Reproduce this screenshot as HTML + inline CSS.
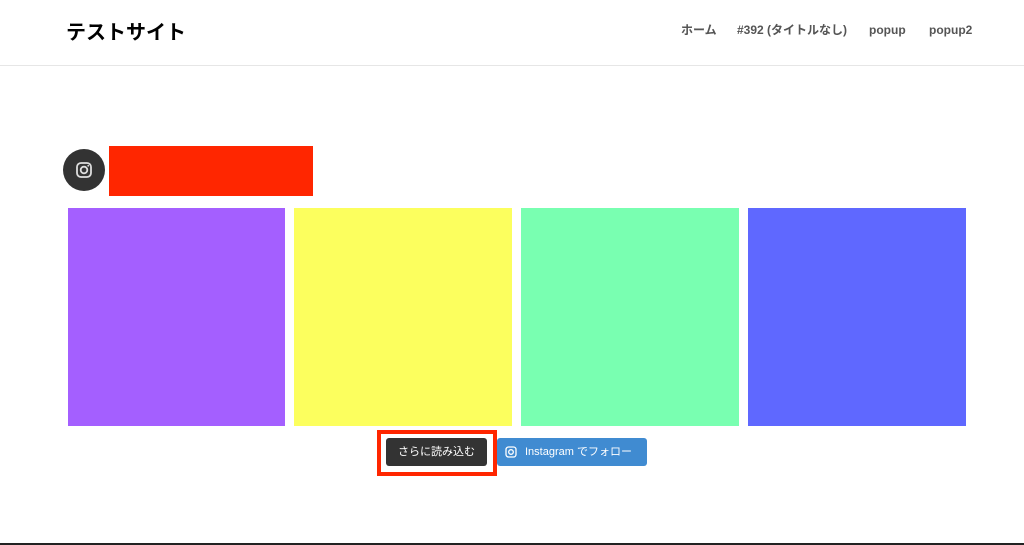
<!DOCTYPE html>
<html><head><meta charset="utf-8"><style>
body{margin:0;width:1024px;height:545px;background:#fff;position:relative;overflow:hidden;font-family:"Liberation Sans","Noto Sans CJK JP",sans-serif}
.a{position:absolute}
.nav{top:22px;height:16px;line-height:16px;font-size:12px;font-weight:bold;color:#555;white-space:nowrap}
</style></head><body>
<div class="a" style="left:66px;top:16px;font-size:20px;font-weight:bold;color:#000">テストサイト</div>
<div class="a nav" style="left:681px">ホーム</div>
<div class="a nav" style="left:737px">#392 (タイトルなし)</div>
<div class="a nav" style="left:869px">popup</div>
<div class="a nav" style="left:929px">popup2</div>
<div class="a" style="left:0;top:65px;width:1024px;height:1px;background:#e6e6e6"></div>
<div class="a" style="left:63px;top:149px;width:42px;height:42px;border-radius:50%;background:#333"></div>
<svg class="a" style="left:74px;top:160px" width="20" height="20" viewBox="0 0 20 20"><rect x="3" y="3" width="14" height="14" rx="4" fill="none" stroke="#ddd" stroke-width="1.8"/><circle cx="10" cy="10" r="3.3" fill="none" stroke="#ddd" stroke-width="1.8"/><circle cx="14.2" cy="5.8" r="0.9" fill="#ddd"/></svg>
<div class="a" style="left:109px;top:146px;width:204px;height:50px;background:#ff2600"></div>
<div class="a" style="left:68px;top:208px;width:217px;height:218px;background:#a45fff"></div>
<div class="a" style="left:294px;top:208px;width:218px;height:218px;background:#fcff5e"></div>
<div class="a" style="left:521px;top:208px;width:218px;height:218px;background:#79ffb1"></div>
<div class="a" style="left:748px;top:208px;width:218px;height:218px;background:#5f68ff"></div>
<div class="a" style="left:377px;top:430px;width:112px;height:38px;border:4px solid #ff2600"></div>
<div class="a" style="left:386px;top:438px;width:101px;height:28px;background:#333;border-radius:3px;color:#fff;font-size:11px;line-height:28px;text-align:center">さらに読み込む</div>
<div class="a" style="left:497px;top:438px;width:150px;height:28px;background:#408bd1;border-radius:3px;color:#fff;font-size:11px;line-height:28px"><svg style="position:absolute;left:8px;top:8px" width="12" height="12" viewBox="0 0 12 12"><rect x="1" y="1" width="10" height="10" rx="2.5" fill="none" stroke="#fff" stroke-width="1.3"/><circle cx="6" cy="6" r="2.3" fill="none" stroke="#fff" stroke-width="1.3"/></svg><span style="position:absolute;left:28px">Instagram でフォロー</span></div>
<div class="a" style="left:0;top:543px;width:1024px;height:2px;background:#222"></div>
</body></html>
